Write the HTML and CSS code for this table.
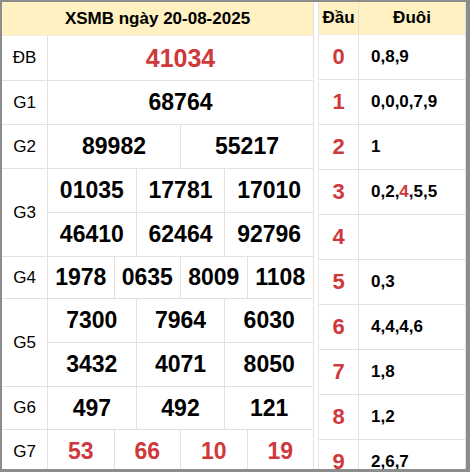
FILE: index.html
```html
<!DOCTYPE html>
<html lang="vi">
<head>
<meta charset="utf-8">
<title>XSMB ngày 20-08-2025</title>
<link rel="stylesheet" href="styles.css">
</head>
<body>
<div class="frame">
  <div class="results">
    <div class="title">XSMB ngày 20-08-2025</div>
    <div class="row r-db">
      <div class="lbl">ĐB</div>
      <div class="cells"><div class="cell special">41034</div></div>
    </div>
    <div class="row r-g1">
      <div class="lbl">G1</div>
      <div class="cells"><div class="cell">68764</div></div>
    </div>
    <div class="row r-g2">
      <div class="lbl">G2</div>
      <div class="cells"><div class="cell">89982</div><div class="cell">55217</div></div>
    </div>
    <div class="row r-g3">
      <div class="lbl">G3</div>
      <div class="stack">
        <div class="cells sub"><div class="cell">01035</div><div class="cell">17781</div><div class="cell">17010</div></div>
        <div class="cells"><div class="cell">46410</div><div class="cell">62464</div><div class="cell">92796</div></div>
      </div>
    </div>
    <div class="row r-g4">
      <div class="lbl">G4</div>
      <div class="cells"><div class="cell">1978</div><div class="cell">0635</div><div class="cell">8009</div><div class="cell">1108</div></div>
    </div>
    <div class="row r-g5">
      <div class="lbl">G5</div>
      <div class="stack">
        <div class="cells sub"><div class="cell">7300</div><div class="cell">7964</div><div class="cell">6030</div></div>
        <div class="cells"><div class="cell">3432</div><div class="cell">4071</div><div class="cell">8050</div></div>
      </div>
    </div>
    <div class="row r-g6">
      <div class="lbl">G6</div>
      <div class="cells"><div class="cell">497</div><div class="cell">492</div><div class="cell">121</div></div>
    </div>
    <div class="row r-g7">
      <div class="lbl">G7</div>
      <div class="cells"><div class="cell red">53</div><div class="cell red">66</div><div class="cell red">10</div><div class="cell red">19</div></div>
    </div>
  </div>

  <div class="loto">
    <div class="lrow lhead"><div class="dau">Đầu</div><div class="duoi">Đuôi</div></div>
    <div class="lrow"><div class="dau">0</div><div class="duoi">0,8,9</div></div>
    <div class="lrow"><div class="dau">1</div><div class="duoi">0,0,0,7,9</div></div>
    <div class="lrow"><div class="dau">2</div><div class="duoi">1</div></div>
    <div class="lrow"><div class="dau">3</div><div class="duoi">0,2,<span class="hl">4</span>,5,5</div></div>
    <div class="lrow"><div class="dau">4</div><div class="duoi"></div></div>
    <div class="lrow"><div class="dau">5</div><div class="duoi">0,3</div></div>
    <div class="lrow"><div class="dau">6</div><div class="duoi">4,4,4,6</div></div>
    <div class="lrow"><div class="dau">7</div><div class="duoi">1,8</div></div>
    <div class="lrow"><div class="dau">8</div><div class="duoi">1,2</div></div>
    <div class="lrow"><div class="dau">9</div><div class="duoi">2,6,7</div></div>
  </div>
</div>
</body>
</html>
```

FILE: styles.css
```css
* { box-sizing: border-box; }

html, body {
  margin: 0;
  padding: 0;
  background: #8c8c8c;
}

body {
  width: 470px;
  height: 472px;
  overflow: hidden;
  font-family: "Liberation Sans", Arial, sans-serif;
  color: #000;
}

.frame {
  margin: 2px 0 0 2px;
  width: 464px;
  height: 467px;
  background: #fff;
  overflow: hidden;
  display: flex;
  align-items: flex-start;
  gap: 4px;
}

/* left results table */
.results {
  width: 312px;
  flex: none;
  border-right: 1px solid #e4e0db;
}

.title {
  height: 34px;
  background: #fff1c2;
  border-bottom: 1px solid #f4ecd6;
  font-weight: bold;
  font-size: 17px;
  display: flex;
  align-items: center;
  justify-content: center;
}

.row {
  display: flex;
  border-bottom: 1px solid #e4e0db;
}

.r-db { height: 45px; }
.r-g1 { height: 44px; }
.r-g2 { height: 44px; }
.r-g3 { height: 88px; }
.r-g4 { height: 42px; }
.r-g5 { height: 88px; }
.r-g6 { height: 43px; }
.r-g7 { height: 44px; }

.lbl {
  width: 46px;
  flex: none;
  border-right: 1px solid #e4e0db;
  display: flex;
  align-items: center;
  justify-content: center;
  font-size: 17px;
}

.stack {
  flex: 1;
  display: flex;
  flex-direction: column;
}

.stack .cells { flex: 1; }

.cells {
  flex: 1;
  display: flex;
}

.cells.sub {
  border-bottom: 1px solid #e4e0db;
}

.cell {
  flex: 1;
  display: flex;
  align-items: center;
  justify-content: center;
  font-weight: bold;
  font-size: 23px;
}

.cell + .cell {
  border-left: 1px solid #e4e0db;
}

.cell.special {
  color: #d0393b;
  font-size: 25px;
}

.cell.red {
  color: #d0393b;
}

/* right loto table */
.loto {
  width: 148px;
  flex: none;
  border-left: 1px solid #e9e5e0;
  border-right: 1px solid #e4e0db;
}

.lrow {
  display: flex;
  height: 45px;
  border-bottom: 1px solid #e4e0db;
}

.lrow.lhead {
  height: 33px;
  background: #fff1c2;
  border-bottom: 1px solid #f4ecd6;
}

.dau {
  width: 40px;
  flex: none;
  border-right: 1px solid #e4e0db;
  display: flex;
  align-items: center;
  justify-content: center;
  font-weight: bold;
  font-size: 22px;
  color: #d0393b;
}

.duoi {
  flex: 1;
  display: flex;
  align-items: center;
  padding-left: 12px;
  font-weight: bold;
  font-size: 17px;
}

.lhead .dau {
  color: #000;
  font-size: 17px;
}

.lhead .duoi {
  justify-content: center;
  padding-left: 0;
}

.hl {
  color: #d0393b;
}
```
